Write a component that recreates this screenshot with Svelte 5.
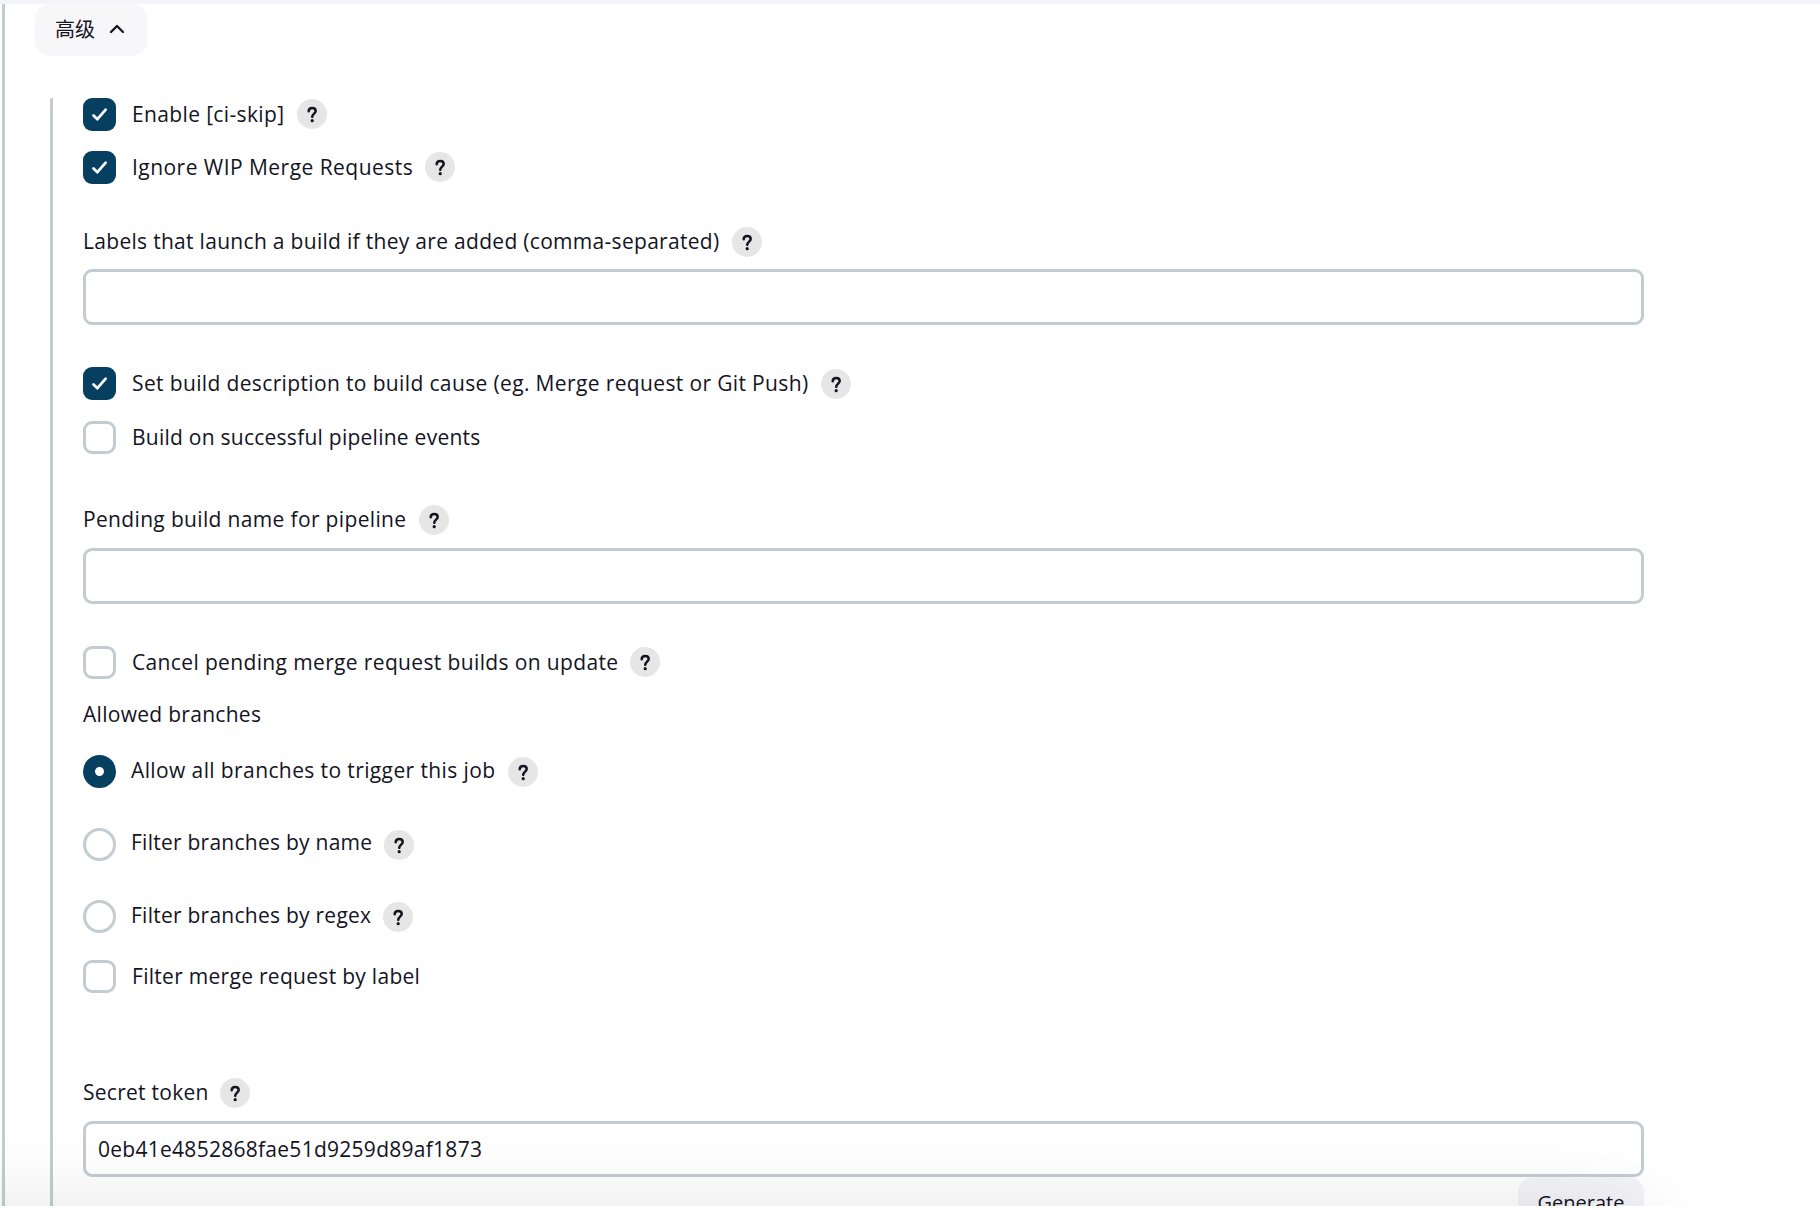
<script>
  let labels = $state("");
  let pendingName = $state("");
  let token = $state("0eb41e4852868fae51d9259d89af1873");
  let branchFilter = $state("all");
  let open = $state(true);

  let flags = $state({
    ciSkip: true,
    ignoreWip: true,
    setDescription: true,
    pipelineEvents: false,
    cancelPending: false,
    filterByLabel: false
  });

  const branches = [
    { value: "all", text: "Allow all branches to trigger this job", width: 377, spacing: 0.39 },
    { value: "name", text: "Filter branches by name", width: 253, spacing: 0.25 },
    { value: "regex", text: "Filter branches by regex", width: 252, spacing: 0.25 }
  ];
</script>

{#snippet help()}
  <button class="help" type="button" aria-label="Help">
    <svg viewBox="0 0 30 30" width="30" height="30">
      <path d="M11.7 12.2 C11.7 10 13.2 8.9 15.2 8.9 C17.2 8.9 18.7 10.2 18.7 12 C18.7 14.6 15.4 14.7 15.2 17.8" />
      <circle cx="15.2" cy="21.7" r="1.6" />
    </svg>
  </button>
{/snippet}

{#snippet checkbox(key, text, spacing, width)}
  <div class="row">
    <label class="choice" style:width={width ? width + 50 + "px" : null}>
      <input class="native" type="checkbox" bind:checked={flags[key]} />
      <span class="box" class:checked={flags[key]}>
        {#if flags[key]}
          <svg viewBox="0 0 33 33" width="33" height="33">
            <path d="M10.5 17.5 L14.4 21.2 L22.7 11.7" />
          </svg>
        {/if}
      </span>
      <span class="text" style:letter-spacing={spacing + "px"}>{text}</span>
    </label>
    {#if width}
      {@render help()}
    {/if}
  </div>
{/snippet}

<div class="page">
  <div class="topbar"></div>
  <div class="section">
    <button class="advanced" type="button" onclick={() => (open = !open)}>
      <span>高级</span>
      <svg viewBox="0 0 16 10" width="16" height="10">
        <path d="M2 8 L8 2 L14 8" />
      </svg>
    </button>

    {#if open}
      <div class="options">
        <div class="group first">
          {@render checkbox("ciSkip", "Enable [ci-skip]", 0.36, 164)}
          {@render checkbox("ignoreWip", "Ignore WIP Merge Requests", 0.46, 292)}
        </div>

        <div class="field labels">
          <div class="row">
            <label for="labels" class="text">Labels that launch a build if they are added (comma-separated)</label>
            {@render help()}
          </div>
          <input id="labels" class="input" bind:value={labels} />
        </div>

        <div class="group second">
          {@render checkbox("setDescription", "Set build description to build cause (eg. Merge request or Git Push)", 0.36, 688)}
          {@render checkbox("pipelineEvents", "Build on successful pipeline events", 0.25)}
        </div>

        <div class="field pending">
          <div class="row">
            <label for="pending" class="text">Pending build name for pipeline</label>
            {@render help()}
          </div>
          <input id="pending" class="input" bind:value={pendingName} />
        </div>

        <div class="group third">
          {@render checkbox("cancelPending", "Cancel pending merge request builds on update", 0.36, 497)}
        </div>

        <div class="heading text">Allowed branches</div>

        <div class="radios">
          {#each branches as branch}
            <div class="row">
              <label class="choice radio" style:width={branch.width + 48 + "px"}>
                <input class="native" type="radio" name="branches" value={branch.value} bind:group={branchFilter} />
                <span class="box round" class:checked={branchFilter === branch.value}></span>
                <span class="text" style:letter-spacing={branch.spacing + "px"}>{branch.text}</span>
              </label>
              {@render help()}
            </div>
          {/each}
        </div>

        <div class="group fourth">
          {@render checkbox("filterByLabel", "Filter merge request by label", 0.29)}
        </div>

        <div class="field token">
          <div class="row">
            <label for="token" class="text">Secret token</label>
            {@render help()}
          </div>
          <input id="token" class="input" bind:value={token} />
          <button class="generate" type="button">Generate</button>
        </div>
      </div>
    {/if}
  </div>
  <div class="bottom-shadow"></div>
</div>

<style>
  :global(body) {
    margin: 0;
    background: #fff;
  }
  .page {
    position: relative;
    width: 1820px;
    height: 1206px;
    overflow: hidden;
    box-sizing: border-box;
    background: #fff;
    color: #14141f;
    font-family: "Open Sans", "Noto Sans CJK SC", sans-serif;
    font-size: 21px;
  }
  .topbar {
    height: 4px;
    background: #f4f5f9;
  }
  .section {
    margin-left: 2px;
    padding-left: 30px;
    border-left: 3px solid #c3ccd1;
    height: 1202px;
  }
  button {
    font: inherit;
    color: inherit;
    border: none;
    padding: 0;
    cursor: pointer;
  }
  .advanced {
    display: flex;
    align-items: center;
    gap: 14px;
    width: 112px;
    height: 52px;
    padding: 0 0 3px 20px;
    border-radius: 15px;
    background: #f7f7fa;
    font-family: "Noto Sans CJK SC", sans-serif;
    font-size: 20px;
  }
  .advanced span {
    line-height: 30px;
  }
  .advanced path {
    fill: none;
    stroke: #14141f;
    stroke-width: 2.3;
    stroke-linecap: round;
    stroke-linejoin: round;
  }
  .options {
    margin: 42px 0 0 15px;
    padding-left: 30px;
    width: 1561px;
    height: 1130px;
    border-left: 3px solid #c3ccd1;
    border-top-left-radius: 2px;
  }
  .row {
    display: flex;
    align-items: center;
    height: 33px;
  }
  .group {
    display: flex;
    flex-direction: column;
    gap: 20px;
  }
  .choice {
    display: flex;
    align-items: center;
    flex: none;
    cursor: pointer;
  }
  .choice .text {
    margin-left: 16px;
    padding-bottom: 2px;
  }
  .choice.radio .text {
    margin-left: 15px;
    padding-bottom: 4px;
  }
  .native {
    position: absolute;
    opacity: 0;
    pointer-events: none;
  }
  .text {
    line-height: 30px;
    white-space: nowrap;
  }
  .box {
    box-sizing: border-box;
    flex: none;
    width: 33px;
    height: 33px;
    border: 3px solid #c3ccd1;
    border-radius: 9px;
    background: #fff;
  }
  .box.checked {
    border: none;
    background: #073f61;
  }
  .box svg {
    display: block;
  }
  .box path {
    fill: none;
    stroke: #fff;
    stroke-width: 2.7;
    stroke-linecap: round;
    stroke-linejoin: round;
  }
  .round {
    border-radius: 50%;
  }
  .round.checked {
    border: 12px solid #073f61;
    background: #fff;
  }
  .help {
    flex: none;
    width: 30px;
    height: 30px;
    border-radius: 50%;
    background: #e6e6e6;
  }
  .group .help {
    margin-bottom: 1px;
  }
  .help svg {
    display: block;
  }
  .help path {
    fill: none;
    stroke: #14141f;
    stroke-width: 2.5;
    stroke-linecap: round;
  }
  .help circle {
    fill: #14141f;
  }
  .field .row {
    height: 30px;
  }
  .field .text {
    flex: none;
    padding-bottom: 2px;
  }
  .input {
    display: block;
    box-sizing: border-box;
    width: 1561px;
    height: 56px;
    margin-top: 12px;
    padding: 0 12px;
    border: 3px solid #c3ccd1;
    border-radius: 9px;
    outline: none;
    background: #fff;
    color: inherit;
    font: inherit;
    letter-spacing: 0.27px;
  }
  .labels {
    margin-top: 43px;
  }
  .labels .text {
    width: 649px;
    letter-spacing: 0.3px;
  }
  .second {
    margin-top: 42px;
    gap: 21px;
  }
  .second .row:first-child .help {
    margin-bottom: 0;
    margin-top: 1px;
  }
  .pending {
    margin-top: 51px;
  }
  .pending .text {
    width: 336px;
    letter-spacing: 0.34px;
  }
  .pending .input {
    margin-top: 13px;
  }
  .third {
    margin-top: 42px;
  }
  .heading {
    margin-top: 20px;
    letter-spacing: 0.29px;
  }
  .radios {
    display: flex;
    flex-direction: column;
    gap: 39.5px;
    margin-top: 26px;
  }
  .radios .help {
    margin-top: 1px;
  }
  .fourth {
    margin-top: 27px;
  }
  .token {
    margin-top: 85px;
  }
  .token .text {
    width: 137px;
    letter-spacing: 0.27px;
  }
  .token .input {
    margin-top: 13px;
  }
  .generate {
    display: block;
    width: 126px;
    height: 54px;
    margin-left: auto;
    padding-bottom: 4px;
    border-radius: 15px;
    background: #f4f3f8;
    font-size: 20px;
  }
  .bottom-shadow {
    position: absolute;
    left: -100px;
    top: 1206px;
    width: 1744px;
    height: 90px;
    box-shadow: 0 0 80px rgba(0, 0, 0, 0.1);
    pointer-events: none;
  }
</style>
